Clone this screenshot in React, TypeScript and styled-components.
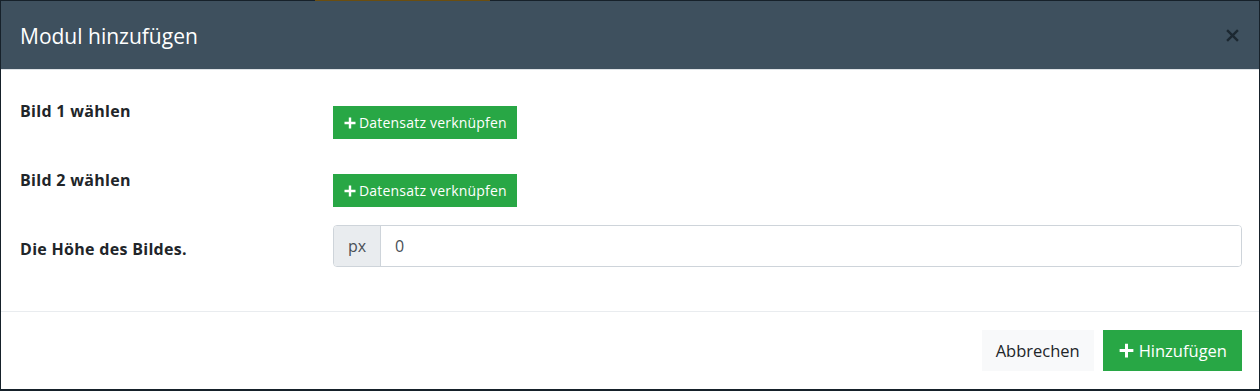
import React from "react";
import styled, { createGlobalStyle } from "styled-components";

const Global = createGlobalStyle`
  html, body { margin: 0; padding: 0; }
  body {
    background: #16212a;
    font-family: "Open Sans", "Noto Sans", sans-serif;
    width: 1260px;
    height: 391px;
    overflow: hidden;
  }
`;

const Backdrop = styled.div`
  display: flex;
  flex-direction: column;
  width: 1260px;
  height: 391px;
`;

const TopStrip = styled.div`
  height: 1px;
  display: flex;
`;

const StripAccent = styled.div`
  margin-left: 315px;
  width: 175px;
  background: #6b4e10;
`;

const Modal = styled.div`
  margin: 0 1px 0 1px;
  height: 388px;
  background: #fff;
  display: flex;
  flex-direction: column;
`;

const Header = styled.div`
  height: 68px;
  background: #3e505e;
  border-bottom: 1px solid #dee2e6;
  display: flex;
  align-items: center;
  justify-content: space-between;
  padding: 0 17px 0 19px;
  box-sizing: content-box;
`;

const Title = styled.h5`
  margin: 0;
  color: #fff;
  font-size: 21px;
  font-weight: 400;
  line-height: 24px;
  padding-top: 1px;
`;

const Close = styled.button`
  border: 0;
  background: transparent;
  padding: 0;
  width: 20px;
  height: 20px;
  display: flex;
  align-items: center;
  justify-content: center;
  cursor: pointer;
`;

const Body = styled.div`
  padding: 28px 17px 44px 19px;
  display: flex;
  flex-direction: column;
`;

const Row = styled.div<{ $gap: number }>`
  display: grid;
  grid-template-columns: 313px 1fr;
  align-items: start;
  margin-bottom: ${(p) => p.$gap}px;
`;

const Label = styled.label<{ $pad: number }>`
  font-weight: 700;
  font-size: 16px;
  letter-spacing: 0.3px;
  line-height: 22px;
  color: #212529;
  padding-top: ${(p) => p.$pad}px;
`;

const LinkButton = styled.button`
  justify-self: start;
  margin-top: 8px;
  height: 33px;
  padding: 0 9px 0 10px;
  background: #28a745;
  border: 1px solid #28a745;
  color: #fff;
  font-family: "Open Sans", "Noto Sans", sans-serif;
  font-size: 14px;
  letter-spacing: 0.2px;
  display: flex;
  align-items: center;
  gap: 3px;
  border-radius: 0;
`;

const InputGroup = styled.div`
  display: flex;
  height: 42px;
  border: 1px solid #ced4da;
  border-radius: 4px;
  box-sizing: border-box;
  overflow: hidden;
`;

const Addon = styled.span`
  width: 46px;
  background: #e9ecef;
  border-right: 1px solid #ced4da;
  color: #495057;
  font-size: 16px;
  display: flex;
  align-items: center;
  justify-content: center;
`;

const Input = styled.input`
  flex: 1;
  border: 0;
  outline: none;
  padding: 0 14px;
  font-family: "Open Sans", "Noto Sans", sans-serif;
  font-size: 16px;
  color: #495057;
`;

const Footer = styled.div`
  border-top: 1px solid #e9ecef;
  padding: 18px 17px 0 0;
  display: flex;
  justify-content: flex-end;
  gap: 9px;
`;

const FooterButton = styled.button<{ $primary?: boolean }>`
  height: 41px;
  padding: 0 ${(p) => (p.$primary ? "15px 0 16px" : "14px")};
  border: 0;
  border-radius: 0;
  font-family: "Open Sans", "Noto Sans", sans-serif;
  font-size: 16.5px;
  display: flex;
  align-items: center;
  gap: 5px;
  background: ${(p) => (p.$primary ? "#28a745" : "#f8f9fa")};
  color: ${(p) => (p.$primary ? "#fff" : "#212529")};
`;

const Plus = ({ size }: { size: number }) => (
  <svg width={size} height={size} viewBox="0 0 12 12">
    <path d="M6 0.5v11M0.5 6h11" stroke="#fff" strokeWidth="2.4" />
  </svg>
);

export default function App() {
  return (
    <>
      <Global />
      <Backdrop>
        <TopStrip>
          <StripAccent />
        </TopStrip>
        <Modal>
          <Header>
            <Title>Modul hinzufügen</Title>
            <Close aria-label="Schließen">
              <svg width="13" height="13" viewBox="0 0 12 12">
                <path d="M1 1l10 10M11 1L1 11" stroke="#1c2831" strokeWidth="2.2" />
              </svg>
            </Close>
          </Header>
          <Body>
            <Row $gap={27}>
              <Label $pad={2}>Bild 1 wählen</Label>
              <LinkButton>
                <Plus size={12} />
                Datensatz verknüpfen
              </LinkButton>
            </Row>
            <Row $gap={18}>
              <Label $pad={3}>Bild 2 wählen</Label>
              <LinkButton>
                <Plus size={12} />
                Datensatz verknüpfen
              </LinkButton>
            </Row>
            <Row $gap={0}>
              <Label $pad={13}>Die Höhe des Bildes.</Label>
              <InputGroup>
                <Addon>px</Addon>
                <Input defaultValue="0" />
              </InputGroup>
            </Row>
          </Body>
          <Footer>
            <FooterButton>Abbrechen</FooterButton>
            <FooterButton $primary>
              <Plus size={15} />
              Hinzufügen
            </FooterButton>
          </Footer>
        </Modal>
      </Backdrop>
    </>
  );
}
